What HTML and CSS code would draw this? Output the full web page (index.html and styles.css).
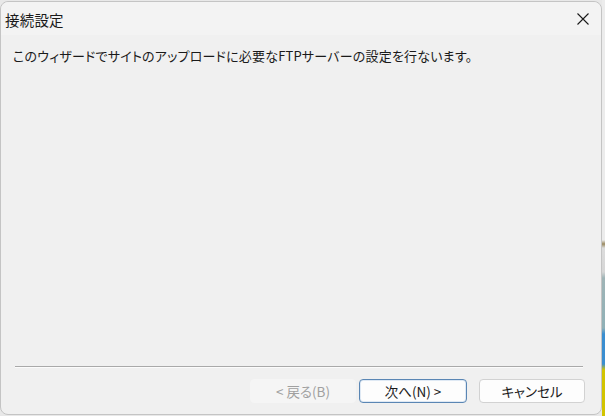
FILE: index.html
```html
<!DOCTYPE html>
<html lang="ja">
<head>
<meta charset="utf-8">
<title>接続設定</title>
<link rel="stylesheet" href="styles.css">
</head>
<body>
<div class="desk">
  <div class="window">
    <div class="titlebar">
      <span class="title">接続設定</span>
      <span class="close" aria-label="閉じる">
        <svg width="12" height="12" viewBox="0 0 12 12"><path d="M0.5 0.5 L11.5 11.5 M11.5 0.5 L0.5 11.5" stroke="#1a1a1a" stroke-width="1.1" fill="none"/></svg>
      </span>
    </div>
    <div class="content">
      <p class="intro">このウィザードでサイトのアップロードに必要なFTPサーバーの設定を行ないます。</p>
    </div>
    <div class="footer">
      <div class="sep"></div>
      <div class="buttons">
        <button class="btn disabled">&lt; 戻る(B)</button>
        <button class="btn primary">次へ(N) &gt;</button>
        <button class="btn cancel">キャンセル</button>
      </div>
    </div>
  </div>
  <div class="strip"></div>
</div>
</body>
</html>
```
FILE: styles.css
```css
html, body {
  margin: 0;
  padding: 0;
}
body {
  width: 605px;
  height: 416px;
  overflow: hidden;
  background: #e8e8e8;
  font-family: "Noto Sans CJK JP", "Noto Sans", sans-serif;
  font-feature-settings: "palt";
  color: #1a1a1a;
}
.desk {
  display: flex;
  height: 416px;
}
.window {
  box-sizing: border-box;
  width: 602px;
  height: 414px;
  margin-top: 1px;
  border: 1px solid #c4c4c4;
  border-radius: 8px;
  background: #f0f0f0;
  display: flex;
  flex-direction: column;
  flex-shrink: 0;
}
.strip {
  flex: 1;
  background: linear-gradient(to bottom,
    #ececec 0, #ececec 240px,
    #9a8a60 244px, #dcdcdc 248px, #d6d6d6 272px,
    #9fb4b6 278px, #8fb0b6 328px,
    #3a8ed0 334px, #3a8ed0 364px,
    #d2c400 370px, #d2c400 416px);
}
.titlebar {
  height: 33px;
  display: flex;
  align-items: center;
  justify-content: space-between;
  padding: 0 12px 0 4px;
  background: #f3f3f3;
  border-radius: 8px 8px 0 0;
}
.title {
  font-size: 14.5px;
  letter-spacing: 0.2px;
  line-height: 20px;
  margin-top: 2px;
}
.close {
  display: flex;
  width: 12px;
  height: 12px;
}
.content {
  flex: 1;
  padding: 0 12px;
}
.intro {
  margin: 11px 0 0;
  font-size: 13px;
  line-height: 20px;
  letter-spacing: 0.2px;
}
.footer {
  padding: 0 16px 11px 14px;
}
.sep {
  height: 0;
  border-top: 1px solid #a9a9a9;
  border-bottom: 1px solid #fbfbfb;
  margin-right: 2px;
}
.buttons {
  display: flex;
  justify-content: flex-end;
  margin-top: 11px;
}
.btn {
  box-sizing: border-box;
  height: 24px;
  font-family: inherit;
  font-size: 13.5px;
  font-feature-settings: "palt";
  line-height: 20px;
  padding: 0;
  border-radius: 4px;
  background: #fdfdfd;
  border: 1px solid #d2d2d2;
  color: #1a1a1a;
}
.disabled {
  width: 106px;
  background: #f5f5f5;
  border-color: #f5f5f5;
  color: #a0a0a0;
}
.primary {
  width: 108px;
  margin-left: 3px;
  border: 1px solid #5a86b4;
  box-shadow: inset 0 0 0 1px #dfe9f4;
}
.cancel {
  width: 106px;
  margin-left: 12px;
}
```
